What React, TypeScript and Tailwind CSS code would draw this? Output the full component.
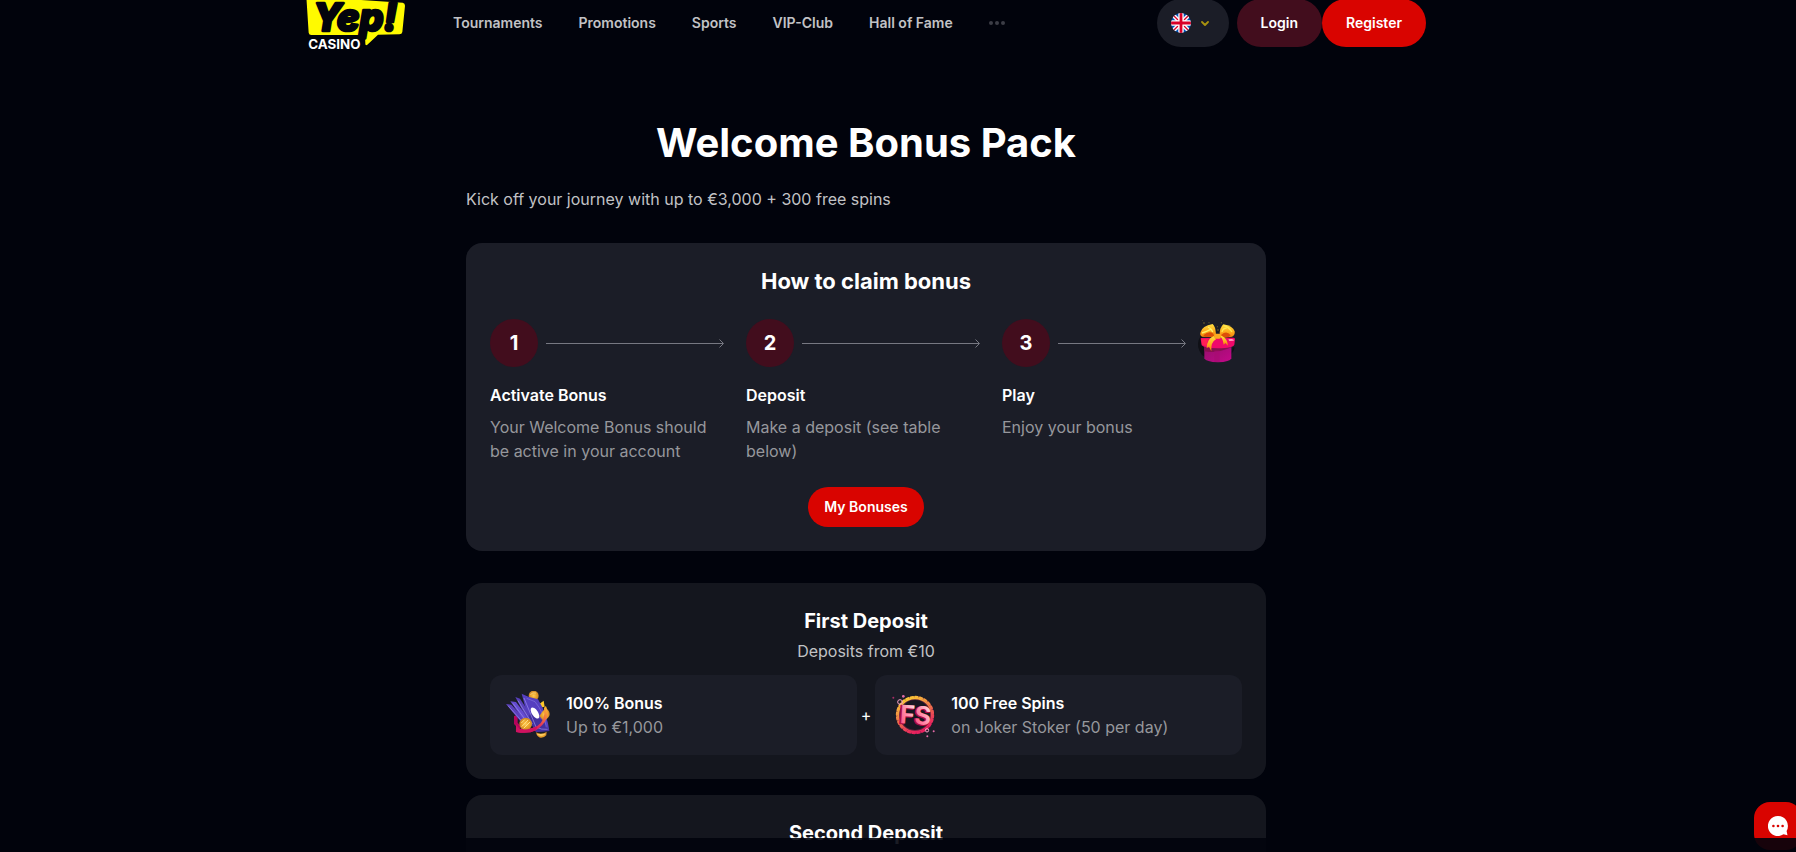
import type { ReactNode } from 'react';

const navLinks = ['Tournaments', 'Promotions', 'Sports', 'VIP-Club', 'Hall of Fame'];

const steps = [
    { num: 1, title: 'Activate Bonus', text: 'Your Welcome Bonus should be active in your account' },
    { num: 2, title: 'Deposit', text: 'Make a deposit (see table below)' },
    { num: 3, title: 'Play', text: 'Enjoy your bonus' },
];

const Logo = () => (
    <svg viewBox="48 0 297 150" className="block h-[50px] w-[99px] overflow-visible" role="img" aria-label="Yep! Casino">
        <path d="M49 -10 L120 -6 L338 8 Q345 9 345 17 L337 96 Q336 103 328 103 L264 104 L232 134 Q226 138 226 131 L225 105 L64 105 Q57 105 56 98 Z" fill="#fffa00" />
        <text x="70" y="94" fontSize="113" fontFamily="Inter, sans-serif" fontWeight="800" fontStyle="italic" fill="#03040c" stroke="#03040c" strokeWidth="8" strokeLinejoin="round">Yep!</text>
        <text x="55" y="146" fontSize="40" fontFamily="Inter, sans-serif" fontWeight="700" fill="#fff">CASINO</text>
    </svg>
);

const Flag = () => (
    <svg viewBox="0 0 20 20" className="size-5">
        <clipPath id="flag"><circle cx="10" cy="10" r="10" /></clipPath>
        <g clipPath="url(#flag)">
            <rect width="20" height="20" fill="#0052b4" />
            <path d="M0 0 L20 20 M20 0 L0 20" stroke="#fff" strokeWidth="4.2" />
            <path d="M0 0 L20 20 M20 0 L0 20" stroke="#d80027" strokeWidth="1.3" />
            <path d="M10 0 V20 M0 10 H20" stroke="#fff" strokeWidth="5.4" />
            <path d="M10 0 V20 M0 10 H20" stroke="#d80027" strokeWidth="2.8" />
        </g>
    </svg>
);

const Arrow = () => (
    <div className="flex flex-1 items-center text-[#777882]">
        <span className="h-px flex-1 bg-current" />
        <svg viewBox="0 0 5 9" className="-ml-1 h-[9px] w-[5px]" fill="none" stroke="currentColor">
            <path d="M.5 .5 L4.5 4.5 L.5 8.5" />
        </svg>
    </div>
);

const GiftIcon = () => (
    <svg viewBox="42 27 144 144" className="size-12 shrink-0">
        <defs>
            <linearGradient id="bow" x1="0" y1="0" x2="0" y2="1">
                <stop offset="0" stopColor="#ffe040" />
                <stop offset=".6" stopColor="#fda61a" />
                <stop offset="1" stopColor="#f07c08" />
            </linearGradient>
            <linearGradient id="box" x1="0" y1="0" x2="1" y2="1">
                <stop offset="0" stopColor="#93106a" />
                <stop offset="1" stopColor="#c4088a" />
            </linearGradient>
        </defs>
        <path d="M62 78 Q48 100 58 122 Q64 136 76 142 L76 90 Z M158 112 L164 112 Q162 124 154 132 Z" fill="#0f1016" />
        <path d="M73 104 H154 V145 Q150 156 114 157 Q78 156 73 145 Z" fill="url(#box)" />
        <path d="M73 124 Q110 132 154 112 V104 H73 Z" fill="#86104f" />
        <path d="M103 122 V156 H119 V122 Z" fill="#a80b72" opacity=".7" />
        <path d="M62 86 Q62 83 66 84 L160 83 Q166 83 165 88 L163 104 Q160 114 114 115 Q72 114 65 106 Z" fill="#f0096a" />
        <path d="M64 88 L84 86 L80 108 L66 104 Z" fill="#ff1f55" />
        <path d="M145 88 Q162 84 162 92 L148 93 Z" fill="#ff9fc4" />
        <path d="M62 66 Q66 48 98 42 Q106 48 108 72 L106 82 L66 80 Q58 76 62 66 Z" fill="url(#bow)" />
        <path d="M70 76 Q88 60 100 71 L103 80 L76 81 Z" fill="#dd4f08" />
        <path d="M84 51 Q94 55 98 66 M66 69 Q80 64 92 58" fill="none" stroke="#fff06a" strokeWidth="4" />
        <path d="M119 76 Q118 54 130 43 Q158 48 164 64 Q166 76 156 80 L126 84 Z" fill="url(#bow)" />
        <path d="M124 74 Q140 60 152 76 L146 81 L127 81 Z" fill="#dd4f08" />
        <path d="M132 47 Q146 51 156 66 M126 66 Q128 55 140 54" fill="none" stroke="#ffe84e" strokeWidth="4" />
        <path d="M102 78 Q82 84 80 114 L87 110 L94 124 Q92 96 108 88 Z" fill="url(#bow)" />
        <path d="M116 78 Q128 80 131 104 L136 99 L144 107 Q142 86 126 78 Z" fill="url(#bow)" />
        <rect x="103" y="71" width="20" height="15" rx="5" fill="#fdab20" />
        <g fill="#8d7b32">
            <circle cx="72" cy="39" r="2" />
            <circle cx="87" cy="38" r="1.5" />
            <circle cx="124" cy="38" r="1.5" />
            <circle cx="114" cy="60" r="2" />
            <circle cx="112" cy="50" r="1.5" />
            <circle cx="67" cy="31" r="1" />
        </g>
    </svg>
);

const MoneyIcon = () => (
    <svg viewBox="18 33 144 144" className="size-12 shrink-0">
        <defs>
            <linearGradient id="ribbon" x1="0" y1="1" x2="1" y2="0">
                <stop offset="0" stopColor="#c80463" />
                <stop offset=".5" stopColor="#e22c58" />
                <stop offset="1" stopColor="#ffc52a" />
            </linearGradient>
            <radialGradient id="coin">
                <stop offset="0" stopColor="#ffcb55" />
                <stop offset=".6" stopColor="#e9a128" />
                <stop offset="1" stopColor="#c9842a" />
            </radialGradient>
        </defs>
        <circle cx="101" cy="47" r="15" fill="url(#coin)" />
        <path d="M91 44 Q98 36 108 39" stroke="#ffe294" strokeWidth="2" fill="none" />
        <path d="M42 108 L53 105 V128 L64 140 L48 156 Q47 144 50 140 L42 132 Z" fill="#b6045b" />
        <path d="M112 66 L121 70 L131 62 L134 80 L116 84 Z" fill="#ffc929" />
        <path d="M18 72 L34 74 L92 138 L76 142 Z" fill="#5b40bd" />
        <path d="M31 64 L48 66 L98 132 L84 140 Z" fill="#644bd0" />
        <path d="M46 51 L60 56 L108 128 L92 138 Z" fill="#5840ba" />
        <path d="M65 41 L85 50 L114 58 Q142 104 148 153 L108 156 Q84 120 65 41 Z" fill="#553fc0" />
        <path d="M92 100 L130 122 L148 153 L108 156 Q92 134 86 108 Z" fill="#3b2a8c" opacity=".65" />
        <path d="M24 77 L76 135 M39 70 L87 134 M54 62 L97 132 M72 54 L108 141 Q124 150 143 148" fill="none" stroke="#9f91ee" strokeWidth="2" />
        <path d="M80 55 L105 65 Q132 98 139 142" fill="none" stroke="#9182e8" strokeWidth="1.5" />
        <ellipse cx="105" cy="99" rx="9" ry="19" transform="rotate(-34 105 99)" fill="#fff" />
        <path d="M118 108 L128 94 L137 85 Q150 92 149 105 Q144 118 130 122 Z" fill="url(#coin)" />
        <path d="M132 84 Q138 74 140 84 Q154 118 108 151 Q84 163 48 156 V134 L60 148 Q88 150 112 138 Q138 120 132 84 Z" fill="url(#ribbon)" />
        <circle cx="77" cy="132" r="19" fill="url(#coin)" />
        <path d="M65 140 L84 120 M71 145 L90 126 M64 129 L74 119" stroke="#ffe085" strokeWidth="3" />
        <path d="M48 142 Q76 156 112 138 L108 151 Q84 163 48 156 Z" fill="#cf1260" />
        <path d="M108 157 Q124 166 140 155 L139 166 Q132 175 120 173 Q110 170 108 157 Z" fill="url(#coin)" />
        <path d="M112 163 Q124 169 136 162" stroke="#ffe085" strokeWidth="2" fill="none" />
    </svg>
);

const SpinsIcon = () => (
    <svg viewBox="33 33 144 144" className="size-12 shrink-0">
        <defs>
            <linearGradient id="ring" x1="0" y1="0" x2=".5" y2="1">
                <stop offset="0" stopColor="#ffe42c" />
                <stop offset=".5" stopColor="#f08048" />
                <stop offset="1" stopColor="#e8205e" />
            </linearGradient>
            <linearGradient id="letters" x1="0" y1="1" x2="1" y2="0">
                <stop offset="0" stopColor="#ff3d70" />
                <stop offset=".55" stopColor="#ff9cb6" />
                <stop offset="1" stopColor="#fff" />
            </linearGradient>
        </defs>
        <circle cx="105" cy="105" r="51" fill="#17131e" stroke="#8c2349" strokeWidth="12" opacity=".6" />
        <circle cx="105" cy="105" r="50" fill="none" stroke="url(#ring)" strokeWidth="5" />
        <circle cx="105" cy="105" r="54" fill="none" stroke="url(#ring)" strokeWidth="7" strokeDasharray="7 7.1" strokeLinecap="round" />
        <g fontSize="76" fontFamily="Inter, sans-serif" fontWeight="700" transform="rotate(4 105 105)">
            <text x="56" y="134" fill="#b30c43" stroke="#b30c43" strokeWidth="3">F</text>
            <text x="100" y="134" fill="#b30c43" stroke="#b30c43" strokeWidth="3">S</text>
            <text x="60" y="132" fill="url(#letters)">F</text>
            <text x="104" y="132" fill="url(#letters)">S</text>
        </g>
        <g fill="none" stroke="#f7a2ca" strokeWidth="3">
            <circle cx="60" cy="66" r="7" />
            <circle cx="141" cy="151" r="5" />
        </g>
        <g fill="#e36ba8">
            <circle cx="70" cy="49" r="4" />
            <circle cx="161" cy="154" r="3" />
            <circle cx="142" cy="169" r="3" />
            <circle cx="40" cy="53" r="3" fill="#a72c66" />
        </g>
    </svg>
);

const BonusBox = ({ icon, title, text }: { icon: ReactNode; title: string; text: string }) => (
    <div className="flex flex-1 items-center gap-3 rounded-xl bg-[#1b1d27] p-4">
        {icon}
        <div>
            <p className="font-semibold text-white">{title}</p>
            <p className="text-[#96979c]">{text}</p>
        </div>
    </div>
);

export default function App() {
    return (
        <div className="h-screen overflow-hidden bg-[#01030c] pr-16 font-['Inter',sans-serif] text-base">
            <header className="mx-auto flex h-[46px] max-w-[1120px] items-center">
                <a href="#" className="self-start"><Logo /></a>
                <nav className="ml-12 flex items-center gap-9 text-sm font-semibold text-[#c1c2c5]">
                    {navLinks.map((link) => (
                        <a key={link} href="#">{link}</a>
                    ))}
                    <button type="button" aria-label="More" className="flex gap-0.5">
                        <span className="size-1 rounded-full bg-[#3b3d46]" />
                        <span className="size-1 rounded-full bg-[#3b3d46]" />
                        <span className="size-1 rounded-full bg-[#3b3d46]" />
                    </button>
                </nav>
                <div className="ml-auto flex items-center text-sm font-semibold text-white">
                    <button type="button" aria-label="Language" className="mr-2 flex h-12 w-18 items-center gap-2.5 rounded-full bg-[#1b1d27] pl-3.5">
                        <Flag />
                        <svg viewBox="0 0 8 5" className="h-[5px] w-2" fill="none" stroke="#a8920f" strokeWidth="1.8" strokeLinecap="round" strokeLinejoin="round">
                            <path d="M1 1 L4 4 L7 1" />
                        </svg>
                    </button>
                    <button type="button" className="h-12 rounded-full bg-[#420d1d] px-6">Login</button>
                    <button type="button" className="h-12 rounded-full bg-[#d90400] px-6">Register</button>
                </div>
            </header>

            <main className="mx-auto mt-[73px] max-w-[800px]">
                <h1 className="text-center text-[40px] leading-12 font-bold text-white">Welcome Bonus Pack</h1>
                <p className="mt-5 text-[#c1c2c5]">Kick off your journey with up to €3,000 + 300 free spins</p>

                <section className="mt-8 rounded-2xl bg-[#1b1d27] p-6">
                    <h2 className="text-center text-[22px] leading-7 font-bold text-white">How to claim bonus</h2>
                    <div className="mt-6 grid grid-cols-3 gap-4">
                        {steps.map((step) => (
                            <div key={step.num}>
                                <div className={step.num === 3 ? 'flex gap-2' : 'flex gap-2 pr-1.5'}>
                                    <span className="flex size-12 items-center justify-center rounded-full bg-[#420d1d] text-xl font-bold text-white">{step.num}</span>
                                    <Arrow />
                                    {step.num === 3 && <GiftIcon />}
                                </div>
                                <h3 className="mt-4 font-semibold text-white">{step.title}</h3>
                                <p className="mt-2 text-[#96979c]">{step.text}</p>
                            </div>
                        ))}
                    </div>
                    <div className="mt-6 flex justify-center">
                        <button type="button" className="h-10 rounded-full bg-[#d90400] px-4 text-sm font-semibold text-white">My Bonuses</button>
                    </div>
                </section>

                <section className="mt-8 rounded-2xl bg-[#14161e] p-6">
                    <h2 className="text-center text-xl font-bold text-white">First Deposit</h2>
                    <p className="mt-1 text-center text-[#c1c2c5]">Deposits from €10</p>
                    <div className="mt-3 flex items-center gap-1">
                        <BonusBox icon={<MoneyIcon />} title="100% Bonus" text="Up to €1,000" />
                        <span className="text-white">+</span>
                        <BonusBox icon={<SpinsIcon />} title="100 Free Spins" text="on Joker Stoker (50 per day)" />
                    </div>
                </section>

                <section className="mt-4 rounded-2xl bg-[#14161e] p-6">
                    <h2 className="text-center text-xl font-bold text-white">Second Deposit</h2>
                </section>
            </main>

            <button type="button" aria-label="Chat" className="fixed -right-1.5 bottom-0.5 flex size-12 items-center justify-center rounded-2xl bg-[#d90400]">
                <svg viewBox="0 0 20 20" className="size-5">
                    <path d="M10 0 A10 10 0 1 0 15.5 18.3 L19.5 19.3 L18.6 15 A10 10 0 0 0 10 0 Z" fill="#fff" />
                    <g fill="#d90400">
                        <circle cx="5.4" cy="10" r="1.3" />
                        <circle cx="10" cy="10" r="1.3" />
                        <circle cx="14.6" cy="10" r="1.3" />
                    </g>
                </svg>
            </button>
            <div className="fixed inset-x-0 bottom-0 h-3.5 bg-[#01030c]/90" />
        </div>
    );
}
